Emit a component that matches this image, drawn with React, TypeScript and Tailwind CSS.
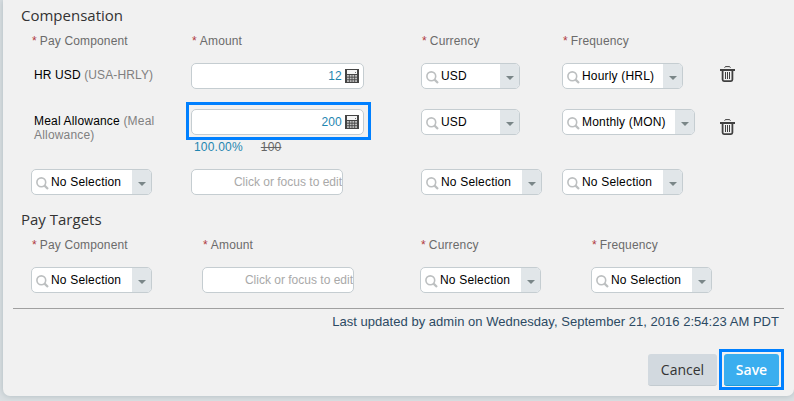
import React from 'react';
import clsx from 'clsx';

function SearchIcon() {
  return (
    <svg className="w-[13px] h-[13px] shrink-0 mt-0.5" viewBox="0 0 13 13" fill="none" stroke="#bcbfc0">
      <circle cx="5.3" cy="5.3" r="4.4" strokeWidth="1.6" />
      <path d="M8.6 8.6L12 12" strokeWidth="2.2" />
    </svg>
  );
}

function CalculatorIcon() {
  return (
    <svg className="w-3.5 h-3.5 shrink-0" viewBox="0 0 14 14">
      <rect width="14" height="14" fill="#444" />
      <rect x="2" y="1" width="10" height="4" fill="#f4f4f4" />
      <rect x="10" y="3" width="1" height="1" fill="#777" />
      {[6, 8.6, 11.2].map((y) =>
        [2, 4.7, 7.4, 10.1].map((x) => (
          <rect key={`${x}-${y}`} x={x} y={y} width="1.9" height="1.7" fill="#c4c4c4" />
        ))
      )}
    </svg>
  );
}

function TrashIcon() {
  return (
    <svg className="w-[15px] h-4" viewBox="0 0 15 16" fill="none" stroke="#404040">
      <path d="M4.5 1.6Q4.9 .6 6 .6H9Q10.1 .6 10.5 1.6" strokeWidth="1" />
      <path d="M0 4H15" strokeWidth="2" />
      <path d="M2.6 4V13.6Q2.6 15.1 4 15.1H11Q12.4 15.1 12.4 13.6V4" strokeWidth="1.8" />
      <path d="M5.5 6V13M7.5 6V13M9.5 6V13" strokeWidth="1" />
    </svg>
  );
}

function Label({ children }: { children: string }) {
  return (
    <div className="pl-px text-[12px] leading-5 tracking-[0.15px] text-[#6b6b6b]">
      <span className="text-[#b03a42] mr-[3px]">*</span>
      {children}
    </div>
  );
}

function Select({ value, className }: { value: string; className: string }) {
  return (
    <button
      className={clsx(
        'flex h-[26px] items-stretch rounded-[5px] border border-[#c5cdd1] bg-white overflow-hidden text-left',
        className
      )}
    >
      <span className="flex flex-1 items-center pl-1 gap-0.5 text-[12px] tracking-[0.18px] text-black whitespace-nowrap">
        <SearchIcon />
        {value}
      </span>
      <span className="flex w-[19px] items-center justify-center bg-[#e1e6e9]">
        <svg className="w-2 h-1 mt-1" viewBox="0 0 8 4" fill="#7a8688">
          <path d="M0 0H8L4 4Z" />
        </svg>
      </span>
    </button>
  );
}

function AmountInput({ value }: { value: string }) {
  return (
    <div className="flex h-[26px] w-[173px] items-center justify-end gap-[3px] rounded-[5px] border border-[#c5cdd1] bg-white pr-1 text-[12px] tracking-[0.2px] text-[#1f86b0]">
      {value}
      <CalculatorIcon />
    </div>
  );
}

function EmptyAmount() {
  return (
    <div className="flex h-[26px] w-[152px] items-center justify-end overflow-hidden whitespace-nowrap rounded-[5px] border border-[#c5cdd1] bg-white text-[12px] text-[#a9a9a9]">
      Click or focus to edit
    </div>
  );
}

export default function App() {
  return (
    <div className="h-[401px] w-[794px] overflow-hidden bg-[#dadfe2] pl-[3px] font-['Liberation_Sans',Arial,sans-serif]">
      <div className="h-[396px] rounded-b-[7px] bg-[#f1f1f1] shadow-[0_0_6px_#aebabf]">
        <h2 className="h-[31px] pl-[18px] pt-[3px] font-['Open_Sans',sans-serif] text-[15px] leading-6 text-[#333]">
          Compensation
        </h2>
        <div className="ml-7 grid grid-cols-[160px_230px_141px_158px_auto] grid-rows-[32px_46px_60px_38px] items-start">
          <Label>Pay Component</Label>
          <Label>Amount</Label>
          <Label>Currency</Label>
          <Label>Frequency</Label>
          <span />

          <div className="pl-[3px] pt-[5px] text-[12px] leading-[14px] tracking-[0.12px] text-black">
            HR USD <span className="text-[#808080]">(USA-HRLY)</span>
          </div>
          <AmountInput value="12" />
          <Select value="USD" className="w-[99px]" />
          <Select value="Hourly (HRL)" className="w-[121px]" />
          <div className="pt-[3px]">
            <TrashIcon />
          </div>

          <div className="pl-[3px] pt-[5px] text-[12px] leading-[14px] tracking-[0.18px] text-black">
            <div>
              Meal Allowance <span className="text-[#808080]">(Meal</span>
            </div>
            <div className="text-[#808080]">Allowance)</div>
          </div>
          <div>
            <div className="-ml-[5px] -mt-[7px] h-[38px] w-[185px] border-[3px] border-[#0080ff] px-0.5 pt-1">
              <AmountInput value="200" />
            </div>
            <div className="-mt-px flex gap-[18px] pl-[3px] text-[12px] leading-4 tracking-[0.2px] text-[#1f86b0]">
              <span>100.00%</span>
              <span className="text-[#666] line-through">100</span>
            </div>
          </div>
          <Select value="USD" className="w-[99px]" />
          <Select value="Monthly (MON)" className="w-[133px]" />
          <div className="pt-2.5">
            <TrashIcon />
          </div>

          <Select value="No Selection" className="w-[121px]" />
          <EmptyAmount />
          <Select value="No Selection" className="w-[121px]" />
          <Select value="No Selection" className="w-[121px]" />
        </div>

        <h2 className="h-7 pl-[18px] font-['Open_Sans',sans-serif] text-[15px] leading-6 text-[#333]">
          Pay Targets
        </h2>
        <div className="ml-7 grid grid-cols-[171px_218px_171px_auto] grid-rows-[32px_41px] items-start">
          <Label>Pay Component</Label>
          <Label>Amount</Label>
          <Label>Currency</Label>
          <Label>Frequency</Label>

          <Select value="No Selection" className="w-[121px]" />
          <EmptyAmount />
          <Select value="No Selection" className="w-[121px]" />
          <Select value="No Selection" className="w-[121px]" />
        </div>

        <div className="ml-2.5 mr-2.5 border-t border-[#a0a0a0]">
          <p className="pr-[5px] pt-1 text-right text-[13px] leading-[18px] tracking-[0.03px] text-[#2c4a63]">
            Last updated by admin on Wednesday, September 21, 2016 2:54:23 AM PDT
          </p>
          <div className="mt-[18px] flex items-start justify-end gap-0.5 font-['Open_Sans',sans-serif] text-[14px]">
            <button className="mt-[5px] h-8 w-[69px] rounded-[3px] border-b border-[#c3cbd0] bg-[#d2d9df] text-[#333]">
              Cancel
            </button>
            <div className="h-[41px] w-[65px] border-[3px] border-[#0080ff] px-0.5 pt-0.5">
              <button className="h-8 w-full rounded-[3px] border-b border-[#1d9bd8] bg-[#3aaeef] font-semibold text-white">
                Save
              </button>
            </div>
          </div>
        </div>
      </div>
    </div>
  );
}
